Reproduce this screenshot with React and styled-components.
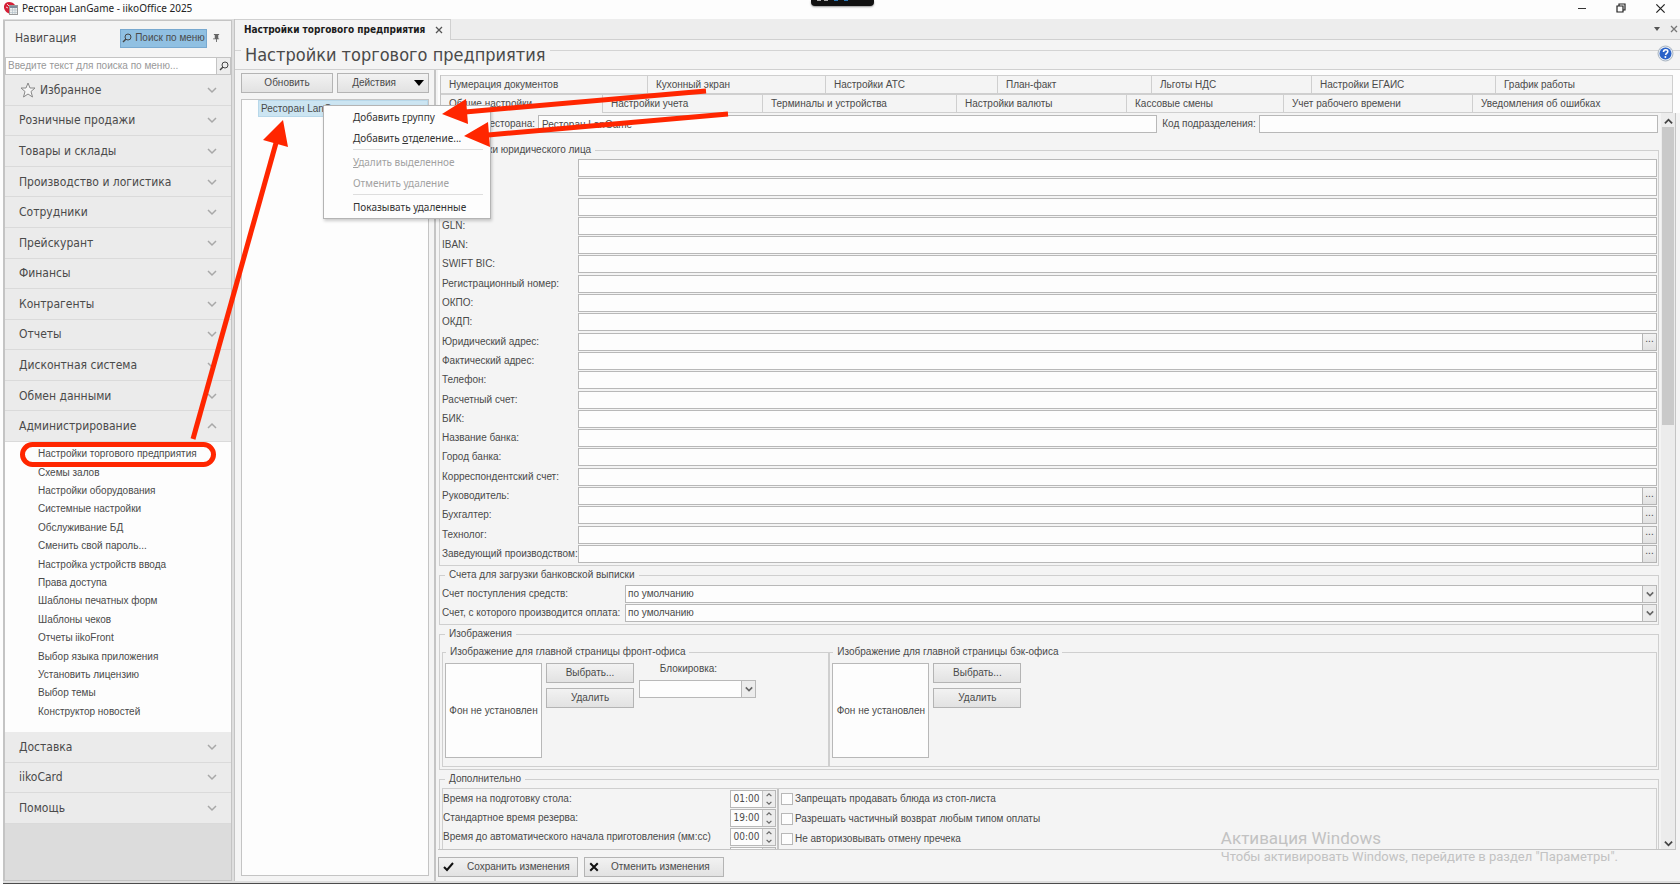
import React from 'react';
import styled, { createGlobalStyle } from 'styled-components';

const line = '#c4c4c4';
const ui = "'Liberation Sans', Arial, sans-serif";
const wide = "'DejaVu Sans Condensed', 'DejaVu Sans', sans-serif";
const system = "'Noto Sans', sans-serif";

const GlobalStyle = createGlobalStyle`
  * {
    box-sizing: border-box;
  }

  body {
    margin: 0;
    background: #fdfdfd;
    color: #4a4a4a;
    font-family: ${ui};
    font-size: 10px;
    line-height: 12px;
  }

  button, input, select {
    margin: 0;
    padding: 0;
    border-radius: 0;
    color: inherit;
    font: inherit;
  }

  svg {
    display: block;
    flex: none;
  }
`;

const Window = styled.div`
  position: relative;
  display: flex;
  flex-direction: column;
  height: 100vh;
  padding-bottom: 1px;
  overflow: hidden;
`;

const TitleBar = styled.header`
  display: flex;
  align-items: center;
  flex: none;
  gap: 4px;
  height: 19px;
  padding: 0 14px 3px 4px;
  font-family: ${system};
  color: #222;
`;

const WindowButtons = styled.div`
  display: flex;
  gap: 27px;
  margin-left: auto;
`;

const IconButton = styled.button`
  display: flex;
  align-items: center;
  justify-content: center;
  min-width: 12px;
  height: 12px;
  border: 0;
  background: none;
`;

const Notch = styled.div`
  position: absolute;
  top: 0;
  left: 811px;
  display: flex;
  gap: 3px;
  width: 63px;
  height: 6px;
  padding-left: 6px;
  border-radius: 0 0 4px 4px;
  background: #111;
  box-shadow: 0 1px 2px rgba(0, 0, 0, 0.4);
`;

const NotchMark = styled.i`
  width: 4px;
  height: 1px;
  margin-left: ${(p) => (p.$blue ? '3px' : '0')};
  background: ${(p) => (p.$blue ? '#2a78b8' : '#aaa')};
`;

const Workspace = styled.div`
  display: flex;
  flex: 1;
  min-height: 0;
  margin-left: 3px;
  border-bottom: 1px solid #4c4c4c;
  background: #dedede;
`;

/* Navigation */

const Sidebar = styled.nav`
  display: flex;
  flex-direction: column;
  flex: none;
  width: 229px;
  margin: 1px 0 2px;
  border: 1px solid ${line};
  border-width: 1px 1px 1px 2px;
  background: #dcdcdc;
`;

const SidebarHead = styled.div`
  display: flex;
  align-items: center;
  height: 36px;
  padding: 0 9px 2px 10px;
  background: #f4f4f4;
  font-family: ${wide};
  font-size: 12px;
`;

const MenuSearchButton = styled.button`
  display: flex;
  align-items: center;
  justify-content: center;
  gap: 3px;
  width: 87px;
  height: 19px;
  margin: 0 3px 0 auto;
  border: 1px solid #78a9d0;
  background: #90c0e2;
  font-family: ${ui};
  font-size: 10px;
`;

const SearchRow = styled.div`
  display: flex;
  flex: none;
  height: 18px;
  border: 1px solid ${line};
  background: #fff;

  input {
    flex: 1;
    min-width: 0;
    padding: 0 2px;
    border: 0;
    outline: 0;
    background: none;
  }

  input::placeholder {
    color: #999;
    opacity: 1;
  }

  button {
    width: 14px;
    height: 100%;
    border-left: 1px solid ${line};
    background: #ededed;
  }
`;

const Sections = styled.div`
  display: grid;
  grid-auto-rows: 1fr;
  flex: none;
  height: ${(p) => (p.$short ? '92px' : '367px')};
`;

const Section = styled.button`
  display: flex;
  align-items: center;
  gap: 4px;
  padding: 0 14px 0 ${(p) => (p.$favorite ? '15px' : '14px')};
  border: 0;
  border-bottom: 1px solid #dadada;
  background: #ebebeb;
  font-family: ${wide};
  font-size: 12px;
  text-align: left;

  & > :last-child {
    margin-left: auto;
  }
`;

const SubList = styled.div`
  display: grid;
  grid-auto-rows: 1fr;
  flex: none;
  height: 290px;
  padding: 3px 0 11px 33px;
  background: #fdfdfd;
`;

const SubItem = styled.a`
  display: flex;
  align-items: center;
  color: inherit;
  text-decoration: none;
`;

/* Document area */

const Document = styled.main`
  display: flex;
  flex-direction: column;
  flex: 1;
  min-width: 0;
  margin: 0 0 2px 2px;
  border-left: 1px solid ${line};
  background: #f4f4f4;
`;

const DocTabs = styled.div`
  display: flex;
  justify-content: space-between;
  flex: none;
  height: 21px;
  border-bottom: 1px solid #d0d0d0;
  background: #ededed;
`;

const DocTab = styled.div`
  display: flex;
  align-items: center;
  gap: 8px;
  height: 21px;
  padding: 0 5px 0 9px;
  border: 1px solid #d0d0d0;
  border-width: 1px 1px 0 0;
  background: #f4f4f4;
  color: #1c1c1c;
  font-family: ${wide};
  font-weight: bold;
`;

const DocTools = styled.div`
  display: flex;
  align-items: center;
  gap: 5px;
`;

const DocHead = styled.div`
  position: relative;
  display: flex;
  flex: none;
  height: 30px;
  border-bottom: 1px solid #d0d0d0;
  line-height: 30px;

  h1 {
    margin: 0 4px;
    font-family: ${wide};
    font-size: 18px;
    font-weight: normal;
  }
`;

const Rule = styled.span`
  width: 6px;
  height: 1px;
  margin-top: 10px;
  flex-grow: ${(p) => (p.$grow ? 1 : 0)};
  background: #d4d4d4;
`;

const HelpButton = styled(IconButton)`
  position: absolute;
  top: 5px;
  right: 6px;
  height: 16px;
`;

const DocBody = styled.div`
  display: flex;
  flex: 1;
  min-height: 0;
`;

const TreePane = styled.section`
  display: flex;
  flex-direction: column;
  flex: none;
  gap: 6px;
  width: 201px;
  padding: 3px 5px 5px 6px;
  border: 1px solid ${line};
  border-width: 0 2px 0 0;
`;

const TreeButtons = styled.div`
  display: grid;
  grid-template-columns: 1fr 1fr;
  gap: 4px;
`;

const Button = styled.button`
  display: flex;
  align-items: center;
  justify-content: center;
  gap: 12px;
  height: 20px;
  padding: 0 4px;
  border: 1px solid #b4b4b4;
  background: linear-gradient(#f2f2f2, #e2e2e2);
`;

const DropButton = styled(Button)`
  justify-content: flex-end;
  gap: 18px;
`;

const Tree = styled.div`
  flex: 1;
  border: 1px solid ${line};
  background: #fdfdfd;
`;

const TreeItem = styled.div`
  height: 17px;
  margin-left: 16px;
  padding: 0 2px;
  border: 1px solid #b8d8ea;
  background: #cce5f2;
  line-height: 15px;
`;

const Settings = styled.section`
  display: flex;
  flex-direction: column;
  flex: 1;
  min-width: 0;
  margin-left: 2px;
`;

const TabArea = styled.div`
  padding: 5px 7px 0 2px;
  background: #fdfdfd;
`;

const TabRow = styled.div`
  display: grid;
  grid-template-columns: ${(p) => p.$sizes.map((size) => `${size}fr`).join(' ')};
  border-left: 1px solid ${line};
`;

const Tab = styled.button`
  min-width: 0;
  height: 19px;
  padding: 0 8px;
  border: 1px solid #cfcfcf;
  border-width: 1px 1px ${(p) => (p.$active ? 0 : '1px')} 0;
  background: #f4f4f4;
  text-align: left;
`;

const ScrollArea = styled.div`
  display: flex;
  flex: 1;
  min-height: 0;
  margin-right: 4px;
  border: 1px solid ${line};
  border-width: 0 1px 1px 0;
`;

const Content = styled.div`
  flex: 1;
  min-width: 0;
  padding: 2px 0 0 1px;
  overflow: hidden;
`;

const Scrollbar = styled.div`
  display: flex;
  flex-direction: column;
  align-items: center;
  justify-content: space-between;
  width: 14px;
  margin-left: 1px;
  padding-top: 2px;
  background: #ececec;
`;

const Thumb = styled.i`
  width: 12px;
  height: 298px;
  margin-bottom: auto;
  background: #c9c9c9;
`;

const NameRow = styled.div`
  display: grid;
  grid-template-columns: 93px 620fr 96px 400fr;
  align-items: center;
  gap: 3px;
  padding: 0 2px 0 3px;
  text-align: right;
  white-space: nowrap;
`;

const Group = styled.fieldset`
  min-width: 0;
  margin: ${(p) => (p.$first ? '11px' : '3px')} 1px 0 0;
  padding: ${(p) => p.$top || '3px'} 1px 2px 2px;
  border: 1px solid #cfcfcf;

  legend {
    margin-left: 3px;
    padding: 0 4px;
  }
`;

const SubGroup = styled(Group)`
  margin: 0;
  padding: 5px 3px 8px 2px;

  legend {
    margin-left: 1px;
  }
`;

const Fields = styled.div`
  display: grid;
  align-content: space-between;
  height: ${(p) => (p.$tall ? '404px' : 'auto')};
  gap: ${(p) => (p.$tall ? 0 : '1px')};
`;

const FieldRow = styled.div`
  display: grid;
  grid-template-columns: ${(p) => (p.$wide ? '183px' : '136px')} 1fr auto;
  align-items: center;
`;

const Input = styled.input`
  grid-column: 2;
  min-width: 0;
  height: 18px;
  padding: 0 3px;
  border: 1px solid #b8b8b8;
  outline: 0;
  background: #fdfdfd;
`;

const CodeInput = styled(Input)`
  grid-column: 4;
`;

const MoreButton = styled(Button)`
  width: 15px;
  height: 18px;
  margin-left: -1px;
  padding: 0 0 5px;
`;

const SelectBox = styled.div`
  position: relative;
  display: flex;

  select {
    width: 100%;
    height: 18px;
    padding: 0 18px 0 2px;
    border: 1px solid #b8b8b8;
    outline: 0;
    appearance: none;
    background: #fdfdfd;
  }
`;

const SelectArrow = styled.span`
  position: absolute;
  inset: 0 0 0 auto;
  display: flex;
  align-items: center;
  justify-content: center;
  width: 15px;
  border: 1px solid #b8b8b8;
  background: #ececec;
  pointer-events: none;
`;

const ImageGroups = styled.div`
  display: grid;
  grid-template-columns: 388fr 829fr;
`;

const ImageRow = styled.div`
  display: flex;
  align-items: flex-start;
`;

const Preview = styled.div`
  display: flex;
  align-items: center;
  justify-content: center;
  width: 97px;
  height: 95px;
  margin-right: 4px;
  border: 1px solid #b8b8b8;
  background: #fdfdfd;
`;

const ImageButtons = styled.div`
  display: grid;
  gap: 5px;
  width: 88px;
`;

const Lock = styled.div`
  display: grid;
  gap: 5px;
  width: 117px;
  margin-left: 5px;

  label {
    text-align: center;
    padding-right: 18px;
  }
`;

const Extra = styled.div`
  display: flex;
  border: 1px solid #cfcfcf;
  border-bottom: 0;
`;

const Times = styled.div`
  display: grid;
  gap: 1px;
  width: 336px;
  padding: 1px 1px 1px 0;
  border-right: 2px solid ${line};
`;

const TimeRow = styled.div`
  display: flex;
  align-items: center;
  justify-content: space-between;
  height: 18px;
`;

const Spin = styled.div`
  display: flex;
  width: 46px;
  height: 18px;
  border: 1px solid #b8b8b8;
  background: #fdfdfd;

  input {
    width: 31px;
    border: 0;
    outline: 0;
    background: none;
    font-family: ${wide};
    text-align: center;
  }
`;

const SpinButtons = styled.div`
  display: grid;
  flex: 1;
  border-left: 1px solid ${line};
  background: #ececec;

  button {
    min-width: 0;
    height: 8px;
  }
`;

const Checks = styled.div`
  display: grid;
  align-content: start;
  gap: 2px;
  padding: 1px 2px;
`;

const Check = styled.label`
  display: flex;
  align-items: center;
  gap: 2px;
  height: 18px;

  input {
    width: 12px;
    height: 12px;
    border: 1px solid #b8b8b8;
    appearance: none;
    background: #fdfdfd;
  }
`;

const Actions = styled.div`
  display: flex;
  flex: none;
  gap: 6px;
  padding: 7px 0 4px;

  button {
    justify-content: flex-start;
    width: 140px;
  }
`;

/* Layers above the window */

const ContextMenu = styled.div`
  position: absolute;
  top: 105px;
  left: 323px;
  display: flex;
  flex-direction: column;
  width: 168px;
  padding: 0 7px 1px 29px;
  border: 1px solid #b4b4b4;
  background: #fdfdfd;
  box-shadow: 1px 2px 3px rgba(0, 0, 0, 0.2);
  font-family: ${system};
`;

const MenuItem = styled.button`
  height: 21px;
  border: 0;
  background: none;
  color: ${(p) => (p.disabled ? '#a2a2a2' : '#333')};
  text-align: left;
  white-space: nowrap;
`;

const MenuLine = styled.hr`
  width: 100%;
  height: 1px;
  margin: 1px 0;
  border: 0;
  background: #dedede;
`;

const Watermark = styled.div`
  position: absolute;
  right: 62px;
  bottom: 20px;
  color: #c2c2c2;
  font-family: Roboto, sans-serif;
  font-size: 13px;
  line-height: 16px;
  pointer-events: none;

  strong {
    display: block;
    font-size: 17px;
    font-weight: normal;
    line-height: 22px;
  }
`;

const Marks = styled.svg`
  position: absolute;
  top: 0;
  left: 0;
  pointer-events: none;
`;

const Chevron = ({ up, size = 10, color = '#a8a8a8', stroke = 1.5 }) => (
  <svg width={size} height={size} viewBox="0 0 10 10" fill="none" stroke={color} strokeWidth={stroke}>
    <path d={up ? 'M1 7l4-4 4 4' : 'M1 3l4 4 4-4'} />
  </svg>
);

const Loupe = () => (
  <svg width="10" height="10" viewBox="0 0 10 10" fill="none" stroke="#444">
    <circle cx="6" cy="4" r="3" />
    <path d="M4 6L1 9" strokeWidth="1.5" />
  </svg>
);

const Cross = ({ size = 8, color = '#555', stroke = 1.3 }) => (
  <svg width={size} height={size} viewBox="0 0 8 8" stroke={color} strokeWidth={stroke}>
    <path d="M1 1l6 6M7 1L1 7" />
  </svg>
);

const Logo = () => (
  <svg width="14" height="15" viewBox="0 0 14 15">
    <path d="M0 5Q1 1 5 1t6 3v4L7 13Q1 12 0 7z" fill="#d51f36" />
    <path d="M3 3l2 2M2 6l2 1" stroke="#fff" strokeWidth=".8" />
    <rect x="5.500" y="4.500" width="8" height="9" fill="#eef0ee" stroke="#999" />
    <path d="M6 6h7" stroke="#7d8b9b" strokeWidth="2" />
    <path d="M6 9h7M6 11.500h7M8.500 7v6M11 7v6" stroke="#b5c0ca" strokeWidth=".7" />
  </svg>
);

const sections = [
  'Избранное',
  'Розничные продажи',
  'Товары и склады',
  'Производство и логистика',
  'Сотрудники',
  'Прейскурант',
  'Финансы',
  'Контрагенты',
  'Отчеты',
  'Дисконтная система',
  'Обмен данными',
  'Администрирование',
];

const adminItems = [
  'Настройки торгового предприятия',
  'Схемы залов',
  'Настройки оборудования',
  'Системные настройки',
  'Обслуживание БД',
  'Сменить свой пароль...',
  'Настройка устройств ввода',
  'Права доступа',
  'Шаблоны печатных форм',
  'Шаблоны чеков',
  'Отчеты iikoFront',
  'Выбор языка приложения',
  'Установить лицензию',
  'Выбор темы',
  'Конструктор новостей',
];

const topTabs = [
  ['Нумерация документов', 207],
  ['Кухонный экран', 178],
  ['Настройки АТС', 172],
  ['План-факт', 154],
  ['Льготы НДС', 160],
  ['Настройки ЕГАИС', 184],
  ['График работы', 177],
];

const bottomTabs = [
  ['Общие настройки', 162],
  ['Настройки учета', 160],
  ['Терминалы и устройства', 194],
  ['Настройки валюты', 170],
  ['Кассовые смены', 157],
  ['Учет рабочего времени', 189],
  ['Уведомления об ошибках', 200],
];

const hiddenFields = ['Юр. лицо', 'ИНН', 'КПП'];

const legalFields = [
  'GLN:',
  'IBAN:',
  'SWIFT BIC:',
  'Регистрационный номер:',
  'ОКПО:',
  'ОКДП:',
  'Юридический адрес:',
  'Фактический адрес:',
  'Телефон:',
  'Расчетный счет:',
  'БИК:',
  'Название банка:',
  'Город банка:',
  'Корреспондентский счет:',
  'Руководитель:',
  'Бухгалтер:',
  'Технолог:',
  'Заведующий производством:',
];

const withPicker = ['Юридический адрес:', 'Руководитель:', 'Бухгалтер:', 'Технолог:', 'Заведующий производством:'];

const accounts = ['Счет поступления средств:', 'Счет, с которого производится оплата:'];

const times = [
  ['Время на подготовку стола:', '01:00'],
  ['Стандартное время резерва:', '19:00'],
  ['Время до автоматического начала приготовления (мм:сс)', '00:00'],
  ['', ''],
];

const checks = [
  'Запрещать продавать блюда из стоп-листа',
  'Разрешать частичный возврат любым типом оплаты',
  'Не авторизовывать отмену пречека',
];

const Select = ({ id, value }) => (
  <SelectBox>
    <select id={id}>
      <option>{value}</option>
    </select>
    <SelectArrow>
      <Chevron size={8} color="#666" stroke={2} />
    </SelectArrow>
  </SelectBox>
);

const Tabs = ({ items, active }) => (
  <TabRow $sizes={items.map(([, size]) => size)}>
    {items.map(([name], i) => (
      <Tab key={name} $active={i === active}>{name}</Tab>
    ))}
  </TabRow>
);

const Navigation = () => (
  <Sidebar>
    <SidebarHead>
      Навигация
      <MenuSearchButton>
        <Loupe /> Поиск по меню
      </MenuSearchButton>
      <IconButton aria-label="Закрепить">
        <svg width="7" height="8" viewBox="0 0 8 9" fill="#666">
          <path d="M1 0h6v1H6v4h1v1H4.500v3h-1V6H0V5h2V1H1z" />
        </svg>
      </IconButton>
    </SidebarHead>
    <SearchRow>
      <input aria-label="Поиск по меню" placeholder="Введите текст для поиска по меню..." />
      <IconButton aria-label="Найти">
        <Loupe />
      </IconButton>
    </SearchRow>
    <Sections>
      {sections.map((name, i) => (
        <Section key={name} $favorite={i === 0}>
          {i === 0 && (
            <svg width="16" height="16" viewBox="0 0 16 16" fill="#f6f6f6" stroke="#888">
              <path d="M8 1l2 5h5l-4 3.500 1.500 5.500L8 12l-4.500 3L5 9.500 1 6h5z" />
            </svg>
          )}
          {name}
          <Chevron up={name === 'Администрирование'} />
        </Section>
      ))}
    </Sections>
    <SubList>
      {adminItems.map((name) => (
        <SubItem key={name} href="#">{name}</SubItem>
      ))}
    </SubList>
    <Sections $short>
      {['Доставка', 'iikoCard', 'Помощь'].map((name) => (
        <Section key={name}>
          {name}
          <Chevron />
        </Section>
      ))}
    </Sections>
  </Sidebar>
);

const ImagePicker = ({ title, lock }) => (
  <SubGroup>
    <legend>{title}</legend>
    <ImageRow>
      <Preview>Фон не установлен</Preview>
      <ImageButtons>
        <Button>Выбрать...</Button>
        <Button>Удалить</Button>
      </ImageButtons>
      {lock && (
        <Lock>
          <label htmlFor="lock">Блокировка:</label>
          <Select id="lock" value="" />
        </Lock>
      )}
    </ImageRow>
  </SubGroup>
);

const SettingsForm = () => (
  <Content>
    <NameRow>
      <label htmlFor="name">Имя ресторана:</label>
      <Input id="name" defaultValue="Ресторан LanGame" />
      <label htmlFor="code">Код подразделения:</label>
      <CodeInput id="code" />
    </NameRow>

    <Group $first>
      <legend>Настройки юридического лица</legend>
      <Fields $tall>
        {hiddenFields.map((name) => (
          <FieldRow key={name}>
            <Input aria-label={name} />
          </FieldRow>
        ))}
        {legalFields.map((name, i) => (
          <FieldRow key={name}>
            <label htmlFor={`legal-${i}`}>{name}</label>
            <Input id={`legal-${i}`} />
            {withPicker.includes(name) && <MoreButton aria-label="Выбрать">...</MoreButton>}
          </FieldRow>
        ))}
      </Fields>
    </Group>

    <Group $top="4px">
      <legend>Счета для загрузки банковской выписки</legend>
      <Fields>
        {accounts.map((name, i) => (
          <FieldRow key={name} $wide>
            <label htmlFor={`account-${i}`}>{name}</label>
            <Select id={`account-${i}`} value="по умолчанию" />
          </FieldRow>
        ))}
      </Fields>
    </Group>

    <Group $top="6px">
      <legend>Изображения</legend>
      <ImageGroups>
        <ImagePicker title="Изображение для главной страницы фронт-офиса" lock />
        <ImagePicker title="Изображение для главной страницы бэк-офиса" />
      </ImageGroups>
    </Group>

    <Group>
      <legend>Дополнительно</legend>
      <Extra>
        <Times>
          {times.map(([name, value], i) => (
            <TimeRow key={name}>
              <label htmlFor={`time-${i}`}>{name}</label>
              <Spin>
                <input id={`time-${i}`} defaultValue={value} />
                <SpinButtons>
                  <IconButton aria-label="Больше"><Chevron up size={6} color="#666" stroke={2} /></IconButton>
                  <IconButton aria-label="Меньше"><Chevron size={6} color="#666" stroke={2} /></IconButton>
                </SpinButtons>
              </Spin>
            </TimeRow>
          ))}
        </Times>
        <Checks>
          {checks.map((name) => (
            <Check key={name}>
              <input type="checkbox" />
              {name}
            </Check>
          ))}
        </Checks>
      </Extra>
    </Group>
  </Content>
);

const Annotations = () => (
  <Marks width="760" height="480" viewBox="0 0 760 480" fill="none" stroke="#ff2600">
    <rect x="22.500" y="444.500" width="191" height="20" rx="10" strokeWidth="5" />
    <path d="M193 439L276 143" strokeWidth="5" />
    <path d="M706 91L465 112" strokeWidth="5" />
    <path d="M728 114L488 135" strokeWidth="5" />
    <path d="M283 120l-20 20 25 7zM442 114l24-15 2 25zM464 136l24-14 2 25z" fill="#ff2600" stroke="none" />
  </Marks>
);

const App = () => (
  <Window>
    <GlobalStyle />
    <TitleBar>
      <Logo />
      Ресторан LanGame - iikoOffice 2025
      <WindowButtons>
        <IconButton aria-label="Свернуть">
          <svg width="10" height="10" viewBox="0 0 10 10" stroke="#333"><path d="M1 5.500h8" /></svg>
        </IconButton>
        <IconButton aria-label="Развернуть">
          <svg width="10" height="10" viewBox="0 0 10 10" fill="none" stroke="#222" strokeWidth="1.200">
            <path d="M1 3h6v6H1zM3 3V1h6v6H7" />
          </svg>
        </IconButton>
        <IconButton aria-label="Закрыть">
          <Cross size={11} color="#222" stroke={0.9} />
        </IconButton>
      </WindowButtons>
    </TitleBar>

    <Workspace>
      <Navigation />
      <Document>
        <DocTabs>
          <DocTab>
            Настройки торгового предприятия
            <IconButton aria-label="Закрыть вкладку"><Cross /></IconButton>
          </DocTab>
          <DocTools>
            <IconButton aria-label="Список вкладок">
              <svg width="6" height="4" viewBox="0 0 6 4" fill="#555"><path d="M0 0h6L3 4z" /></svg>
            </IconButton>
            <IconButton aria-label="Закрыть"><Cross color="#777" /></IconButton>
          </DocTools>
        </DocTabs>
        <DocHead>
          <Rule />
          <h1>Настройки торгового предприятия</h1>
          <Rule $grow />
          <HelpButton aria-label="Справка">
            <svg width="17" height="17" viewBox="0 0 17 17">
              <circle cx="8.500" cy="8.500" r="7.500" fill="#e6ecf4" stroke="#a9b4c0" />
              <circle cx="8.500" cy="8.500" r="6" fill="#2a62c8" />
              <path d="M6.500 7Q6.500 4.700 8.700 4.700T10.800 6.600Q10.800 7.800 9.300 8.500L8.600 10" fill="none" stroke="#fff" strokeWidth="1.600" />
              <circle cx="8.400" cy="12" r="1" fill="#fff" />
            </svg>
          </HelpButton>
        </DocHead>
        <DocBody>
          <TreePane>
            <TreeButtons>
              <Button>Обновить</Button>
              <DropButton>
                Действия
                <svg width="10" height="6" viewBox="0 0 10 6"><path d="M0 0h10L5 6z" /></svg>
              </DropButton>
            </TreeButtons>
            <Tree>
              <TreeItem>Ресторан LanGame</TreeItem>
            </Tree>
          </TreePane>
          <Settings>
            <TabArea>
              <Tabs items={topTabs} />
              <Tabs items={bottomTabs} active={0} />
            </TabArea>
            <ScrollArea>
              <SettingsForm />
              <Scrollbar>
                <IconButton aria-label="Вверх"><Chevron up size={9} color="#444" stroke={2} /></IconButton>
                <Thumb />
                <IconButton aria-label="Вниз"><Chevron size={9} color="#444" stroke={2} /></IconButton>
              </Scrollbar>
            </ScrollArea>
            <Actions>
              <Button>
                <svg width="12" height="10" viewBox="0 0 12 10" fill="none" stroke="#111" strokeWidth="2"><path d="M1 5l3 3 6-7" /></svg>
                Сохранить изменения
              </Button>
              <Button>
                <Cross size={10} color="#111" stroke={1.6} />
                Отменить изменения
              </Button>
            </Actions>
          </Settings>
        </DocBody>
      </Document>
    </Workspace>

    <Notch>
      <NotchMark />
      <NotchMark />
      <NotchMark $blue />
      <NotchMark $blue />
    </Notch>
    <Watermark>
      <strong>Активация Windows</strong>
      Чтобы активировать Windows, перейдите в раздел "Параметры".
    </Watermark>
    <ContextMenu>
      <MenuItem>Добавить <u>г</u>руппу</MenuItem>
      <MenuItem>Добавить <u>о</u>тделение...</MenuItem>
      <MenuLine />
      <MenuItem disabled><u>У</u>далить выделенное</MenuItem>
      <MenuItem disabled>Отменить удаление</MenuItem>
      <MenuLine />
      <MenuItem>Показывать удаленные</MenuItem>
    </ContextMenu>
    <Annotations />
  </Window>
);

export default App;
